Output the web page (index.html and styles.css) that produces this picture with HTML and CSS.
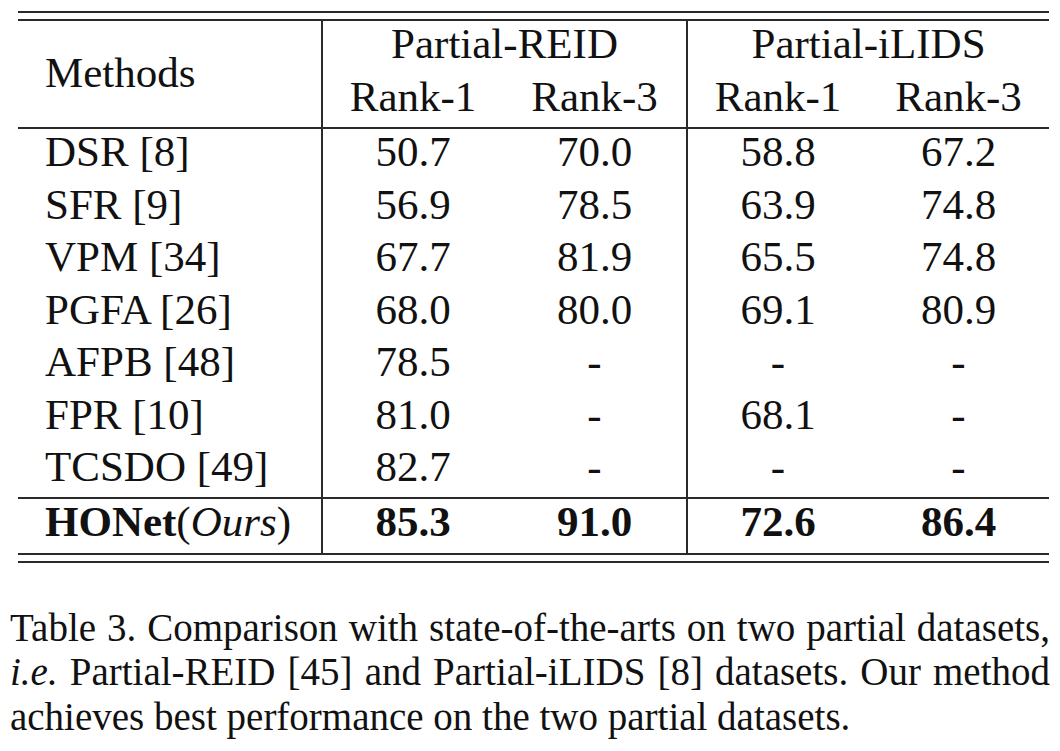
FILE: index.html
```html
<!DOCTYPE html>
<html>
<head>
<meta charset="utf-8">
<link rel="stylesheet" href="styles.css">
</head>
<body>
<div class="page">
  <div class="frame">
    <table class="results">
      <colgroup>
        <col class="c-method">
        <col class="c-num">
        <col class="c-num2">
        <col class="c-num">
        <col class="c-num3">
      </colgroup>
      <thead>
        <tr class="h1">
          <th class="method head-method" rowspan="2">Methods</th>
          <th class="group sep" colspan="2">Partial-REID</th>
          <th class="group sep" colspan="2">Partial-iLIDS</th>
        </tr>
        <tr class="h2">
          <th class="sub sep">Rank-1</th>
          <th class="sub">Rank-3</th>
          <th class="sub sep">Rank-1</th>
          <th class="sub">Rank-3</th>
        </tr>
      </thead>
      <tbody>
        <tr><td class="method">DSR [8]</td><td class="sep">50.7</td><td>70.0</td><td class="sep">58.8</td><td>67.2</td></tr>
        <tr><td class="method">SFR [9]</td><td class="sep">56.9</td><td>78.5</td><td class="sep">63.9</td><td>74.8</td></tr>
        <tr><td class="method">VPM [34]</td><td class="sep">67.7</td><td>81.9</td><td class="sep">65.5</td><td>74.8</td></tr>
        <tr><td class="method">PGFA [26]</td><td class="sep">68.0</td><td>80.0</td><td class="sep">69.1</td><td>80.9</td></tr>
        <tr><td class="method">AFPB [48]</td><td class="sep">78.5</td><td>-</td><td class="sep">-</td><td>-</td></tr>
        <tr><td class="method">FPR [10]</td><td class="sep">81.0</td><td>-</td><td class="sep">68.1</td><td>-</td></tr>
        <tr><td class="method">TCSDO [49]</td><td class="sep">82.7</td><td>-</td><td class="sep">-</td><td>-</td></tr>
        <tr class="ours"><td class="method"><b>HONet</b>(<i>Ours</i>)</td><td class="sep"><b>85.3</b></td><td><b>91.0</b></td><td class="sep"><b>72.6</b></td><td><b>86.4</b></td></tr>
      </tbody>
    </table>
  </div>
  <p class="caption">Table 3. Comparison with state-of-the-arts on two partial datasets, <i>i.e.</i> Partial-REID [45] and Partial-iLIDS [8] datasets. Our method achieves best performance on the two partial datasets.</p>
</div>
</body>
</html>
```

FILE: styles.css
```css
html, body {
  margin: 0;
  padding: 0;
  background: #ffffff;
}

body {
  font-family: "Liberation Serif", "Times New Roman", serif;
  color: #111111;
  width: 1060px;
  height: 751px;
  overflow: hidden;
}

.page {
  padding-top: 11px;
}

.frame {
  margin-left: 18px;
  width: 1031px;
  border-top: 2px solid #2a2a2a;
  border-bottom: 2px solid #2a2a2a;
  padding: 6px 0;
}

.results {
  width: 100%;
  border-collapse: separate;
  border-spacing: 0;
  border-top: 2px solid #2a2a2a;
  border-bottom: 2px solid #2a2a2a;
  font-size: 43px;
  table-layout: fixed;
}

.c-method { width: 303px; }
.c-num { width: 182px; }
.c-num2 { width: 183px; }
.c-num3 { width: 181px; }

.results th,
.results td {
  padding: 0 0 7.5px 0;
  font-weight: normal;
  text-align: center;
  line-height: 45px;
  white-space: nowrap;
  vertical-align: top;
}

.results th.method,
.results td.method {
  text-align: left;
  padding-left: 27px;
}

.results .sep {
  border-left: 2px solid #2a2a2a;
}

.results .h1 th {
  padding-bottom: 8px;
}

.results .h2 th {
  padding-bottom: 8px;
  border-bottom: 2px solid #2a2a2a;
}

.results .h1 th.head-method {
  vertical-align: middle;
  padding-bottom: 4px;
  border-bottom: 2px solid #2a2a2a;
}

.results .ours td {
  border-top: 2px solid #2a2a2a;
  padding-bottom: 9px;
}

.results b {
  font-weight: bold;
}

.caption {
  margin: 43px 0 0 10px;
  width: 1040px;
  font-size: 39px;
  line-height: 44.5px;
  text-align: justify;
}
```
